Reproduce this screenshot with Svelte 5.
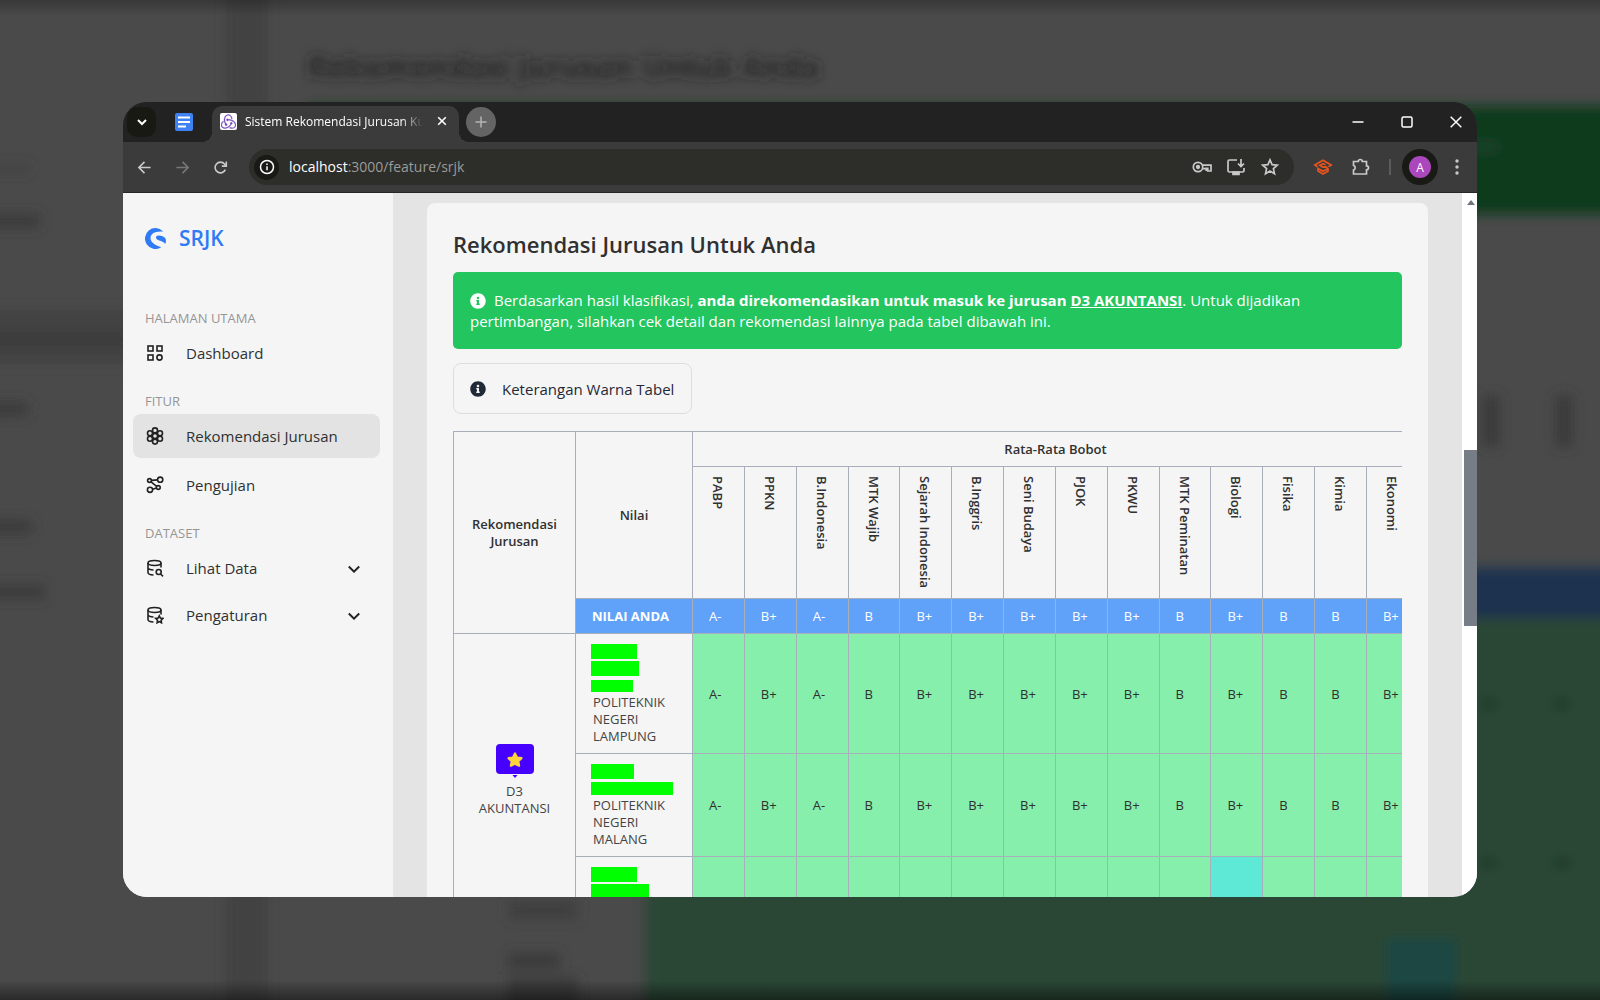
<script>
  const subjects = ['PABP', 'PPKN', 'B.Indonesia', 'MTK Wajib', 'Sejarah Indonesia', 'B.Inggris', 'Seni Budaya', 'PJOK', 'PKWU', 'MTK Peminatan', 'Biologi', 'Fisika', 'Kimia', 'Ekonomi'];
  const grades = ['A-', 'B+', 'A-', 'B', 'B+', 'B+', 'B+', 'B+', 'B+', 'B', 'B+', 'B', 'B', 'B+'];
  const campuses = [
    { bars: [[46, 15], [48, 15], [42, 12]], name: 'POLITEKNIK NEGERI LAMPUNG' },
    { bars: [[43, 15], [82, 13]], name: 'POLITEKNIK NEGERI MALANG' }
  ];
  const lastBars = [[46, 15], [58, 15]];
</script>

{#snippet info()}
  <svg class="info" viewBox="0 0 512 512" aria-hidden="true"><path fill="currentColor" d="M256 8C119.043 8 8 119.083 8 256c0 136.997 111.043 248 248 248s248-111.003 248-248C504 119.083 392.957 8 256 8zm0 110c23.196 0 42 18.804 42 42s-18.804 42-42 42-42-18.804-42-42 18.804-42 42-42zm56 254c0 6.627-5.373 12-12 12h-88c-6.627 0-12-5.373-12-12v-24c0-6.627 5.373-12 12-12h12v-64h-12c-6.627 0-12-5.373-12-12v-24c0-6.627 5.373-12 12-12h64c6.627 0 12 5.373 12 12v100h12c6.627 0 12 5.373 12 12v24z" /></svg>
{/snippet}

{#snippet chevron()}
  <svg class="chev" viewBox="0 0 14 14" aria-hidden="true"><path d="M1.800 5.500 7 10.700l5.200-5.200" /></svg>
{/snippet}

{#snippet redactions(bars)}
  {#each bars as [w, h]}
    <span class="slot"><span class="bar" style="width:{w}px;height:{h}px"></span></span>
  {/each}
{/snippet}

<div class="desktop">
  <svg class="backdrop" viewBox="0 0 1600 1000" preserveAspectRatio="none" aria-hidden="true">
    <defs>
      <filter id="soft" x="-10%" y="-10%" width="120%" height="120%"><feGaussianBlur stdDeviation="6" /></filter>
      <linearGradient id="edge" x1="0" y1="0" x2="0" y2="1">
        <stop offset="0" stop-color="#000" stop-opacity=".25" />
        <stop offset=".016" stop-color="#000" stop-opacity="0" />
        <stop offset=".98" stop-color="#000" stop-opacity="0" />
        <stop offset="1" stop-color="#000" stop-opacity=".45" />
      </linearGradient>
    </defs>
    <rect width="1600" height="1000" fill="#4a4a4a" />
    <g filter="url(#soft)">
      <rect x="226" y="-40" width="42" height="1080" fill="#434343" />
      <rect x="-40" y="310" width="240" height="54" fill="#434343" />
      <rect x="308" y="106" width="1400" height="108" fill="#0b3b1c" />
      <rect x="645" y="568" width="1000" height="50" fill="#1d304f" />
      <rect x="645" y="618" width="1000" height="440" fill="#2a4734" />
      <rect x="1386" y="938" width="70" height="120" fill="#1b4642" />
      <text x="308" y="78" class="ghost-title">Rekomendasi Jurusan Untuk Anda</text>
      <g fill="#3a3a3a">
        <rect x="-20" y="164" width="50" height="9" opacity=".6" />
        <rect x="-20" y="214" width="60" height="14" />
        <rect x="-20" y="332" width="145" height="14" />
        <rect x="-20" y="402" width="48" height="14" />
        <rect x="-20" y="520" width="52" height="14" />
        <rect x="-20" y="585" width="65" height="14" />
        <rect x="1482" y="395" width="18" height="52" />
        <rect x="1555" y="395" width="18" height="52" />
        <rect x="508" y="900" width="70" height="20" opacity=".7" />
        <rect x="508" y="953" width="52" height="16" />
        <rect x="508" y="977" width="70" height="34" />
      </g>
      <g fill="#233c2c">
        <ellipse cx="1489" cy="704" rx="11" ry="7" /><ellipse cx="1562" cy="704" rx="11" ry="7" />
        <ellipse cx="1489" cy="863" rx="11" ry="7" /><ellipse cx="1562" cy="863" rx="11" ry="7" />
      </g>
      <ellipse cx="1486" cy="147" rx="16" ry="6" fill="#1f4229" />
    </g>
    <rect width="1600" height="1000" fill="url(#edge)" />
  </svg>

  <div class="window">
    <header class="titlebar">
      <button class="tabsearch" aria-label="Cari tab"><svg viewBox="0 0 14 14"><path d="m3 5 4 4 4-4" /></svg></button>
      <span class="pinned">
        <svg viewBox="0 0 18 18" aria-hidden="true"><rect width="18" height="18" rx="2" fill="#3e82f4" /><path d="M3 4.500h12M3 9h12M3 13.500h8" stroke="#fff" stroke-width="1.800" /></svg>
      </span>
      <div class="tab">
        <span class="favicon"><svg viewBox="0 0 24 24" aria-hidden="true"><path fill="#764abc" stroke="#764abc" stroke-width=".5" d="M16.634 16.504c.87-.075 1.543-.84 1.5-1.754-.047-.914-.796-1.648-1.709-1.648h-.061a1.71 1.71 0 00-1.648 1.769c.03.479.226.869.494 1.153-1.048 2.038-2.621 3.535-5.005 4.795-1.603.838-3.296 1.154-4.944.929-1.378-.194-2.456-.81-3.116-1.799-.988-1.499-1.078-3.116-.255-4.734.601-1.166 1.499-2.023 2.099-2.443a9.96 9.96 0 01-.42-1.543C-.868 14.408-.416 18.752.932 20.805c1.004 1.498 3.057 2.456 5.304 2.456.599 0 1.230-.044 1.843-.194 3.897-.749 6.848-3.086 8.541-6.532zM21.963 12.760c-2.321-2.727-5.738-4.225-9.634-4.225h-.51c-.253-.554-.837-.899-1.498-.899h-.045c-.943 0-1.678.81-1.647 1.753.03.898.794 1.648 1.708 1.648h.074a1.690 1.690 0 001.499-1.049h.555c2.309 0 4.495.674 6.488 1.992 1.527 1.005 2.622 2.323 3.237 3.896.538 1.288.509 2.547-.045 3.597-.855 1.647-2.294 2.517-4.196 2.517-1.199 0-2.367-.375-2.967-.644-.36.298-.96.794-1.394 1.093 1.318.598 2.652.943 3.940.943 2.922 0 5.094-1.647 5.919-3.236.898-1.798.824-4.824-1.470-7.416zM6.490 17.042c.03.899.793 1.648 1.708 1.648h.06a1.688 1.688 0 001.648-1.768c0-.9-.779-1.647-1.693-1.647h-.06c-.06 0-.149 0-.226.029-1.243-2.098-1.768-4.347-1.572-6.772.12-1.828.72-3.417 1.797-4.735.899-1.124 2.593-1.680 3.747-1.708 3.236-.061 4.585 3.971 4.689 5.574l1.498.45c-.345-4.914-3.400-7.492-6.322-7.492-2.742 0-5.273 1.993-6.293 4.915-1.394 3.896-.479 7.641 1.229 10.638-.149.195-.239.554-.21.868z" /></svg></span>
        <span class="tabtitle">Sistem Rekomendasi Jurusan Kuliah</span>
        <button class="tabclose" aria-label="Tutup tab"><svg viewBox="0 0 10 10"><path d="m1.200 1.200 7.600 7.600M8.800 1.200 1.200 8.800" /></svg></button>
      </div>
      <button class="newtab" aria-label="Tab baru"><svg viewBox="0 0 12 12"><path d="M6 .500v11M.500 6h11" /></svg></button>
      <div class="controls">
        <button aria-label="Kecilkan"><svg viewBox="0 0 12 12"><path d="M.500 6h11" /></svg></button>
        <button aria-label="Perbesar"><svg viewBox="0 0 12 12"><rect x="1" y="1" width="10" height="10" rx="1.500" /></svg></button>
        <button aria-label="Tutup"><svg viewBox="0 0 12 12"><path d="m.700.700 10.600 10.600M11.300.700.700 11.300" /></svg></button>
      </div>
    </header>

    <div class="toolbar">
      <nav class="history" aria-label="Riwayat">
        <button aria-label="Kembali"><svg viewBox="0 0 16 16"><path d="M14.500 8H2M8 2 2 8l6 6" /></svg></button>
        <button class="off" aria-label="Maju"><svg viewBox="0 0 16 16"><path d="M1.500 8H14M8 2l6 6-6 6" /></svg></button>
        <button aria-label="Muat ulang"><svg viewBox="0 0 16 16"><path d="M13.200 10.300A5.700 5.700 0 1 1 12.300 4.300L14 6.200M14.200 1.500v5H9.400" /></svg></button>
      </nav>
      <div class="omnibox">
        <button class="site" aria-label="Info situs"><svg viewBox="0 0 16 16"><circle cx="8" cy="8" r="6.500" /><path d="M8 7.300v4M8 4.500v1.600" /></svg></button>
        <div class="url" role="textbox" tabindex="0" aria-label="Alamat"><b>localhost</b>:3000/feature/srjk</div>
        <button class="oi" aria-label="Sandi"><svg viewBox="0 0 20 20"><circle cx="6" cy="10" r="4.700" /><circle cx="6" cy="10" r="1.300" fill="currentColor" /><path d="M10.200 8.200H19V14h-3.200v-2.600h-1.600V14" /><path d="M10.200 11.600h4" /></svg></button>
        <button class="oi" aria-label="Pasang"><svg viewBox="0 0 20 20"><path d="M11 3H3.500A1.500 1.500 0 0 0 2 4.500v9A1.500 1.500 0 0 0 3.500 15h13a1.500 1.500 0 0 0 1.500-1.500V11M15 2v7M12 6.500l3 3 3-3" /><path d="M7 15h6v2.500H7z" fill="currentColor" /></svg></button>
        <button class="oi" aria-label="Tandai"><svg viewBox="0 0 20 20"><path d="m10 2.800 2.100 4.800 5.200.5-3.900 3.500 1.100 5.100L10 14l-4.500 2.700 1.100-5.100-3.900-3.500 5.200-.5z" /></svg></button>
      </div>
      <div class="extensions">
        <button class="orange" aria-label="Ekstensi belajar"><svg viewBox="0 0 20 20"><path d="M4.500 9.800 1.800 8 10 3.300 18.200 8l-2.700 1.700M12.500 7.800 10 6.600 6.800 8.300l3.200 1.800 3-.2 1.800 1.800-4.800 2.600-5-2.900v2.700L10 17l5-2.700v-2.600" /></svg></button>
        <button aria-label="Ekstensi"><svg viewBox="0 0 20 20"><path d="M2.500 4.500h4.800a2 2 0 0 1 4 0h4.200v4.300a2 2 0 0 1 0 4v4.200h-13v-4a2.400 2.400 0 0 0 0-4.600z" /></svg></button>
        <i class="rule"></i>
        <button class="avatar" aria-label="Profil"><span>A</span></button>
        <button class="dots" aria-label="Menu"><svg viewBox="0 0 4 16"><circle cx="2" cy="2" r="1.700" /><circle cx="2" cy="8" r="1.700" /><circle cx="2" cy="14" r="1.700" /></svg></button>
      </div>
    </div>

    <div class="page">
      <aside>
        <a class="brand" href="#top">
          <svg viewBox="0 0 24 24" aria-hidden="true"><path fill="currentColor" d="M20.500 3.600A12 12 0 1 0 18 22.400c.3-.2.2-.5 0-.6-2-.9-4.500-1.600-6.700-3C8 16.800 6.300 14.600 6.300 11.500 6.300 6.800 10.500 4.600 15 4.200c2-.1 3.600-.1 5.300-.1.300 0 .4-.3.200-.5z" /><path fill="currentColor" d="M23.900 13.500c-.4-2-1.900-3.300-4.500-4.300-2.600-.9-5.500-.9-6.500.5-1.200 1.800.6 3.500 3.500 4.600 2.400.9 4.900 1.700 6.300 3.500.2.300.5.200.6-.1.500-1.300.8-2.700.6-4.200z" /></svg>
          SRJK
        </a>
        <nav aria-label="Menu utama">
          <h2>HALAMAN UTAMA</h2>
          <a class="item" href="#dashboard">
            <svg viewBox="0 0 18 18"><rect x="2" y="2" width="5" height="5" /><rect x="11" y="2" width="5" height="5" /><rect x="2" y="11" width="5" height="5" /><circle cx="13.500" cy="13.500" r="2.600" /></svg>
            Dashboard
          </a>
          <h2>FITUR</h2>
          <div class="group wide">
            <a class="item active" href="#rekomendasi">
              <svg viewBox="0 0 18 18"><circle cx="9" cy="9" r="2.600" /><circle cx="9" cy="3.400" r="2.500" /><circle cx="9" cy="14.600" r="2.500" /><circle cx="4" cy="6.200" r="2.500" /><circle cx="14" cy="6.200" r="2.500" /><circle cx="4" cy="11.800" r="2.500" /><circle cx="14" cy="11.800" r="2.500" /></svg>
              Rekomendasi Jurusan
            </a>
            <a class="item" href="#pengujian">
              <svg viewBox="0 0 18 18"><circle cx="3.500" cy="4.500" r="1.900" /><circle cx="14.200" cy="3.700" r="2.600" /><circle cx="4" cy="13.800" r="2.600" /><circle cx="12.300" cy="11.500" r="1.900" /><path d="m5.400 4.400 6.200-.5M5 5.800l5.700 4.600M6.600 13.200l3.900-1.200" /></svg>
              Pengujian
            </a>
          </div>
          <h2>DATASET</h2>
          <div class="group">
            <button class="item">
              <svg viewBox="0 0 18 18"><ellipse cx="8.500" cy="4" rx="6.500" ry="2.500" /><path d="M2 4v9.500c0 1.300 2 2.300 5.500 2.500M15 4v4.500M2 9c.5 1.200 2.500 1.900 5.500 2" /><circle cx="12.700" cy="13" r="2.500" /><path d="m14.600 15 2.400 2.300" /></svg>
              Lihat Data
              {@render chevron()}
            </button>
            <button class="item">
              <svg viewBox="0 0 18 18"><ellipse cx="8.500" cy="4" rx="6.500" ry="2.500" /><path d="M2 4v9.500c0 1.300 2 2.300 5.500 2.500M15 4v4.500M2 9c.5 1.200 2.500 1.900 5.500 2" /><path d="m13.300 9.800 1.100 2.300 2.500.300-1.800 1.800.4 2.600-2.200-1.200-2.200 1.200.4-2.600-1.800-1.800 2.500-.3z" /></svg>
              Pengaturan
              {@render chevron()}
            </button>
          </div>
        </nav>
      </aside>

      <main>
        <section class="card">
          <h1>Rekomendasi Jurusan Untuk Anda</h1>
          <p class="alert">{@render info()}Berdasarkan hasil klasifikasi, <strong>anda direkomendasikan untuk masuk ke jurusan <u>D3 AKUNTANSI</u></strong>. Untuk dijadikan pertimbangan, silahkan cek detail dan rekomendasi lainnya pada tabel dibawah ini.</p>
          <button class="legend">{@render info()}Keterangan Warna Tabel</button>
          <div class="scroller">
            <table>
              <colgroup>
                <col class="c1" /><col class="c2" />
                {#each subjects as s}<col class="c3" />{/each}
              </colgroup>
              <thead>
                <tr class="r1">
                  <th rowspan="3">Rekomendasi Jurusan</th>
                  <th rowspan="2">Nilai</th>
                  <th colspan={subjects.length}>Rata-Rata Bobot</th>
                </tr>
                <tr>
                  {#each subjects as s}<th class="subject"><span>{s}</span></th>{/each}
                </tr>
                <tr class="mine">
                  <th>NILAI ANDA</th>
                  {#each grades as g}<td>{g}</td>{/each}
                </tr>
              </thead>
              <tbody>
                {#each campuses as c, i}
                  <tr>
                    {#if i === 0}
                      <td class="major" rowspan="3">
                        <svg viewBox="0 0 38 34" aria-hidden="true"><rect width="38" height="30" rx="4" fill="#4600ff" /><path d="M16.500 31h5L19 34z" fill="#4600ff" /><path d="m19 9.500 2 4 4.500.7-3.200 3.100.8 4.400-4.100-2-4.100 2 .8-4.400-3.200-3.100 4.500-.7z" fill="#ffd43b" stroke="#ffd43b" stroke-width="2.200" stroke-linejoin="round" /></svg>
                        D3 AKUNTANSI
                      </td>
                    {/if}
                    <td class="campus">{@render redactions(c.bars)}<span class="name">{c.name}</span></td>
                    {#each grades as g}<td class="grade">{g}</td>{/each}
                  </tr>
                {/each}
                <tr class="last">
                  <td class="campus">{@render redactions(lastBars)}</td>
                  {#each grades as g, i}<td class="grade" class:teal={i === 10}></td>{/each}
                </tr>
              </tbody>
            </table>
          </div>
        </section>
      </main>
      <div class="scrollbar"><i class="up"></i><i class="thumb"></i></div>
    </div>
  </div>
</div>

<style>
  :global(body) { margin: 0; }
  * { box-sizing: border-box; }
  button { border: 0; background: none; padding: 0; font: inherit; color: inherit; }
  a { color: inherit; text-decoration: none; }
  svg { display: block; fill: none; flex: none; }

  .desktop {
    position: relative;
    display: flex;
    height: 100vh;
    min-height: 600px;
    padding: 102px 123px 103px;
    overflow: hidden;
    font: 13px/17px "Open Sans", "Noto Sans", sans-serif;
    color: #303030;
  }
  .backdrop { position: absolute; inset: 0; width: 100%; height: 100%; }
  .ghost-title { font-size: 31px; font-weight: 600; fill: #222; }

  .window {
    position: relative;
    flex: 1;
    min-width: 0;
    display: flex;
    flex-direction: column;
    border-radius: 24px;
    overflow: hidden;
    background: #3b3b3b;
  }

  .titlebar { display: flex; align-items: center; height: 40px; flex: none; background: #222; padding-left: 4px; color: #fff; }
  .titlebar svg { stroke: currentColor; }
  .titlebar .pinned svg, .favicon svg { stroke: none; }
  .tabsearch { width: 29px; height: 30px; border-radius: 10px; background: #191914; display: grid; place-items: center; }
  .tabsearch svg { width: 14px; height: 14px; stroke-width: 2; }
  .pinned { display: grid; place-items: center; width: 56px; }
  .pinned svg { width: 18px; height: 18px; }
  .tab { position: relative; align-self: flex-end; display: flex; align-items: center; gap: 8px; width: 247px; height: 36px; padding: 0 12px 6px 8px; border-radius: 10px 10px 0 0; background: #3b3b3b; }
  .tab::before, .tab::after { content: ""; position: absolute; bottom: 0; width: 10px; height: 10px; }
  .tab::before { left: -10px; background: radial-gradient(circle at 0 0, #222 10px, #3b3b3b 10px); }
  .tab::after { right: -10px; background: radial-gradient(circle at 100% 0, #222 10px, #3b3b3b 10px); }
  .favicon { display: grid; place-items: center; width: 17px; height: 17px; border-radius: 2px; background: #fff; }
  .favicon svg { width: 15px; height: 15px; }
  .tabtitle { flex: 1; min-width: 0; margin-right: 6px; overflow: hidden; white-space: nowrap; font-size: 12px; mask-image: linear-gradient(90deg, #000 88%, transparent); }
  .tabclose svg { width: 10px; height: 10px; stroke-width: 1.600; }
  .newtab { margin-left: 7px; width: 30px; height: 30px; border-radius: 50%; background: #646464; color: #b5b5b5; display: grid; place-items: center; }
  .newtab svg { width: 12px; height: 12px; stroke-width: 1.500; }
  .controls { margin-left: auto; display: flex; }
  .controls button { width: 49px; height: 40px; display: grid; place-items: center; }
  .controls button:last-child { margin-right: -3px; }
  .controls svg { width: 12px; height: 12px; stroke-width: 1.500; }

  .toolbar { display: flex; align-items: center; height: 51px; flex: none; padding: 0 10px; border-bottom: 1px solid #262626; color: #c9c9c9; }
  .toolbar svg { stroke: currentColor; stroke-width: 1.700; }
  .history { display: flex; gap: 16px; }
  .history button { width: 22px; height: 22px; display: grid; place-items: center; }
  .history svg { width: 15px; height: 15px; }
  .history .off { color: #777; }
  .omnibox { flex: 1; display: flex; align-items: center; gap: 10px; height: 36px; margin-left: 18px; padding: 0 14px 0 5px; border-radius: 18px; background: #2d2d29; }
  .site { width: 25px; height: 25px; border-radius: 50%; background: #191915; color: #fff; display: grid; place-items: center; }
  .site svg { width: 16px; height: 16px; }
  .site svg { stroke-width: 1.500; }
  .url { flex: 1; font-size: 14px; line-height: 20px; color: #9b9b98; }
  .url b { font-weight: 400; color: #fff; }
  .oi { margin-left: 4px; }
  .oi svg, .extensions button svg { width: 20px; height: 20px; }
  .extensions { display: flex; align-items: center; gap: 18px; margin-left: 19px; }
  .orange { color: #e8541e; }
  .rule { width: 2px; height: 16px; background: #5c5c5c; }
  .avatar { display: grid; place-items: center; width: 36px; height: 36px; margin: 0 -7px; border-radius: 50%; background: #191915; }
  .avatar span { display: grid; place-items: center; width: 22px; height: 22px; border-radius: 50%; background: #ab47bc; color: #fff; font-size: 12px; }
  .extensions .dots { width: 20px; margin-left: -2px; display: grid; place-items: center; }
  .extensions .dots svg { width: 4px; height: 16px; fill: currentColor; stroke: none; }

  .page { flex: 1; min-height: 0; display: flex; background: #e4e4e4; }
  aside { width: 270px; flex: none; background: #f5f5f5; padding: 30px 13px 0 10px; }
  .brand { display: flex; align-items: center; gap: 13px; height: 30px; margin-left: 12px; color: #2f7bf6; font-size: 21px; line-height: 30px; font-weight: 600; }
  .brand svg { width: 21px; height: 21px; }
  aside nav { padding-top: 56px; }
  h2 { margin: 17px 0 4px 12px; font-size: 13px; line-height: 18px; font-weight: 500; color: #959595; }
  aside nav h2:first-child { margin-top: 0; }
  .group { display: grid; gap: 3px; }
  .wide { gap: 5px; }
  .item { display: flex; align-items: center; width: 100%; height: 44px; padding: 0 19px 0 13px; gap: 22px; border-radius: 8px; font-size: 15px; line-height: 22px; color: #303030; }
  .item svg { width: 18px; height: 18px; stroke: #222; stroke-width: 1.600; }
  .item .chev { width: 14px; height: 14px; margin-left: auto; stroke-width: 2; }
  .active { background: #e3e3e3; }

  main { flex: 1; min-width: 0; overflow: hidden; padding: 10px 34px 0; }
  .card { background: #f5f5f5; border-radius: 8px; padding: 26px 26px 80px; }
  h1 { margin: 0; font-size: 22px; line-height: 30px; font-weight: 600; }
  .alert { margin: 13px 0 14px; padding: 18px 17px 17px; border-radius: 5px; background: #22c55e; color: #fff; font-size: 15px; line-height: 21px; }
  .info { width: 16px; height: 16px; }
  .alert .info { display: inline-block; vertical-align: -3px; margin-right: 8px; }
  .alert strong { font-weight: 700; }
  .legend { display: flex; align-items: center; gap: 16px; height: 51px; padding: 0 17px 0 16px; border: 1px solid #ddd; border-radius: 8px; color: #1f2937; font-size: 15px; font-weight: 500; line-height: 22px; }
  .scroller { margin-top: 17px; overflow: hidden; }
  table { width: 966px; table-layout: fixed; border-collapse: collapse; }
  .c1 { width: 122px; }
  .c2 { width: 117px; }
  th, td { border: 1px solid #a8afbb; padding: 9px 16px 8px; font-size: 13px; line-height: 17px; }
  th { font-weight: 600; }
  .r1 th[rowspan="3"] { padding: 9px; }
  .subject { height: 132px; text-align: left; vertical-align: top; }
  .subject span { display: block; writing-mode: vertical-rl; white-space: nowrap; }
  .mine { background: #60a2fa; color: #fff; font-weight: 500; }
  .mine th { text-align: left; padding-right: 0; font-weight: 700; }
  .mine td, .grade { padding-right: 0; }
  .major { text-align: center; color: #444; padding: 9px 16px; }
  .major svg { width: 38px; height: 34px; margin: 0 auto 5px; }
  .campus { padding: 9px 9px 8px 15px; color: #444; vertical-align: top; }
  .slot { display: flex; align-items: center; height: 17px; }
  .bar { background: #00ff00; }
  .name { display: block; width: 80px; padding-left: 2px; }
  .grade { background: #87efac; font-weight: 500; }
  .teal { background: #5ee9d7; }
  .last { height: 70px; }

  .scrollbar { width: 15px; flex: none; display: flex; flex-direction: column; align-items: flex-end; background: #fff; }
  .up { width: 0; height: 0; margin: 7px 2px 0 0; border: 4px solid transparent; border-top: 0; border-bottom: 5px solid #6f747d; }
  .thumb { width: 13px; height: 25%; margin-top: 245px; background: #777d87; }
</style>
